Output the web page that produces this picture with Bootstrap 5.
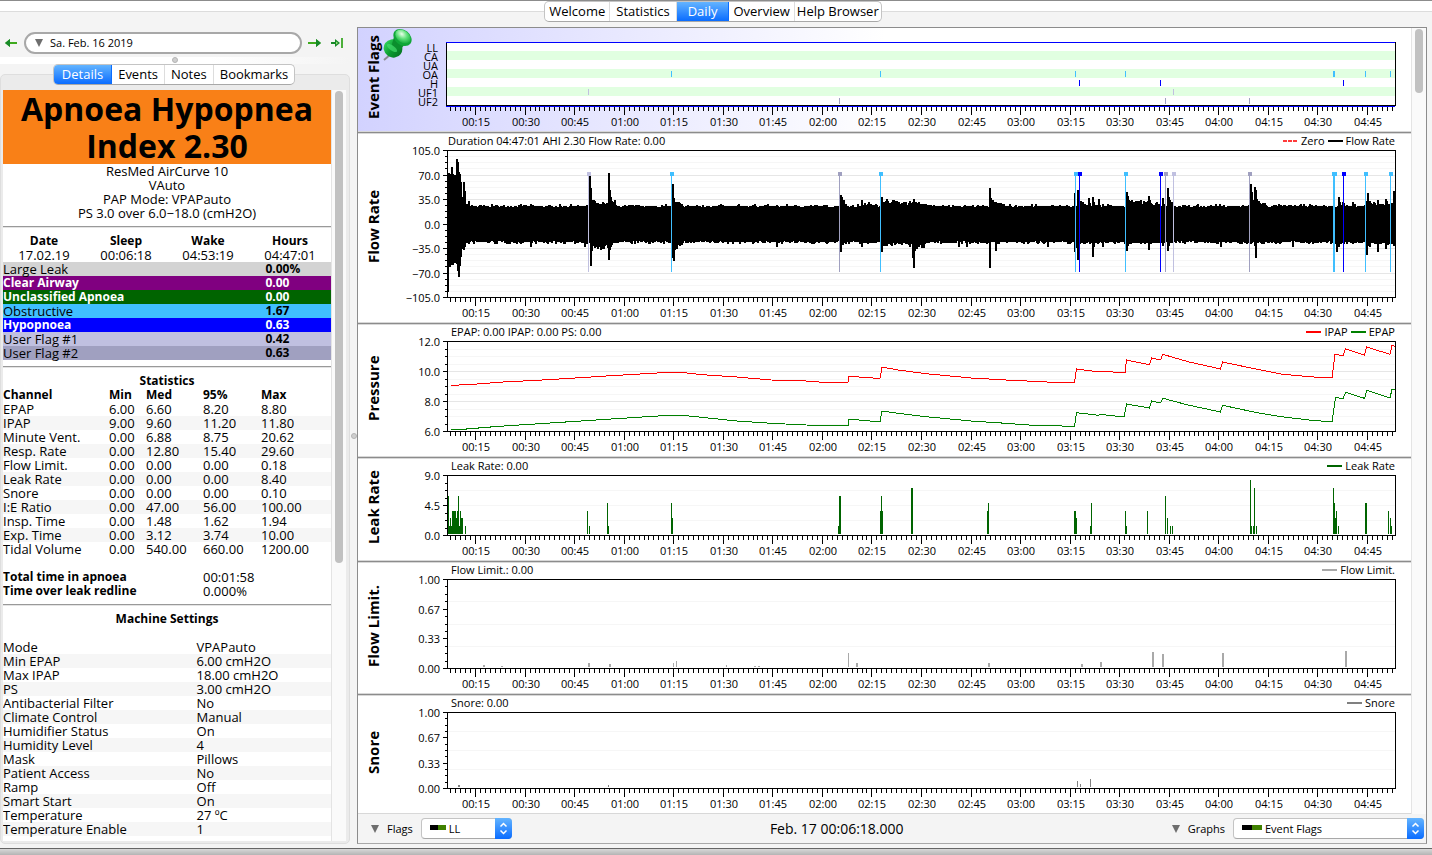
<!DOCTYPE html>
<html lang="en">
<head>
<meta charset="utf-8">
<meta name="viewport" content="width=device-width, initial-scale=1">
<title>Daily view</title>
<link rel="stylesheet" href="https://cdn.jsdelivr.net/npm/bootstrap@5.3.0/dist/css/bootstrap.min.css">
<style>
:root{--ui:"Open Sans","Noto Sans",sans-serif}
body{font-family:var(--ui);font-size:13px;line-height:14px;color:#000;background:#f4f4f4;overflow:hidden}
button,select{font-family:inherit;color:#000}
/* segmented tab bars */
.topstrip{height:27px;border-top:1px solid #8c8c8c;background:linear-gradient(#fff 10px,#dcdcdc 10px,#dcdcdc 11px,#f4f4f4 11px);padding-right:6px}
.seg{height:21px;background:#fff;border:1px solid #c4c4c4;border-bottom-color:#a8a8a8;border-radius:5px;overflow:hidden}
.seg button{border:0;border-right:1px solid #ddd;background:none;padding:0 6px;line-height:19px;font-size:13px}
.topstrip .seg button{padding:0 4px}
.topstrip .seg button:nth-child(2){padding:0 6px}
.topstrip .seg button:last-child{padding:0 2px}
.seg button:last-child{border-right:0}
.seg button.active{background:linear-gradient(#63b4ff,#0a6cff);color:#fff;border-color:#0a6cff}
.topstrip .seg button.active{padding:0 11px}
/* left side */
.side{width:350px}
.daterow{height:30px;padding:5px 0 3px 4px}
.datebtn{height:22px;margin:0 6px;border:2px solid #a8a8a8;border-radius:11px;background:#fff;font-size:11px;padding:0 9px;line-height:16px;gap:7px}
.tri{display:inline-block;border:4px solid transparent;border-top:8px solid #6e6e6e;border-bottom:0}
.icobtn{border:0;background:none;padding:0;line-height:0}
.grip{height:7px;background:linear-gradient(90deg,#fff,#fff 60%,#f4f4f4)}
.knob{width:6px;height:6px;border-radius:50%;background:#cfcfcf;border:1px solid #b4b4b4}
.pane{background:#ebebeb;border:1px solid #dedede;border-radius:5px;margin-top:-11px;padding:15px 3px 2px 2px}
.tabholder{position:relative;z-index:1;padding-right:2px}
.report{background:#fff;overflow:hidden}
.ahi{background:#f98017;font-size:32px;font-weight:700;line-height:37px;text-align:center;margin:0}
.rule{height:2px;margin:6px 0;background:linear-gradient(#999 1px,#e4e4e4 1px)}
.report table{width:100%;table-layout:fixed;border-collapse:collapse}
.report td,.report th{padding:0;height:14px;white-space:nowrap;vertical-align:top}
.report b,.report th{font-size:12px;font-weight:700}
.report b{display:block}
.zebra tr:nth-child(even){background:#f6f6f6}
.report h2{font-size:12px;line-height:14px;font-weight:700;text-align:center;margin:0}
.settings{margin-top:14px}
.bar{width:15px;background:#fafafa;border-left:1px solid #e4e4e4;padding:1px 3px}
.thumb{width:8px;border-radius:4px;background:#c1c1c1}
.split{width:7px}
/* graphs */
.graphs{border:1px solid #8c8c8c;border-bottom-color:#a8a8a8;margin-right:5px}
.chart{background:#fff;border-bottom:3px solid #d8d8d8;position:relative}
.chart::after{content:"";position:absolute;left:0;right:0;bottom:-2px;height:1px;background:#8c8c8c}
.chart.selected{background:linear-gradient(90deg,#d2d2ff,#fff 50%)}
.chart:last-child{border-bottom-width:2px}
.vtitle{width:30px;writing-mode:vertical-rl;transform:rotate(180deg);font-size:15px;line-height:18px;font-weight:700;text-align:center;white-space:nowrap;display:flex;justify-content:center;align-items:center;padding-top:4px}
.head{height:16px;line-height:13px;font-size:11px;font-weight:500;padding:0 16px 0 63px}
.flow .head{padding-left:60px}
.selected .head{height:14px}
.keys{gap:3px}
.key{width:15px;height:2px}
.key.dashed{background:repeating-linear-gradient(90deg,#ff3b3b 0 4px,#fff 4px 5px)}
.plot{display:block;width:100%;overflow:visible;font-size:11px;font-weight:500}
.pin{position:absolute;left:25px;top:0}
.status{height:29px;font-size:11px;padding:0 2px 0 13px}
.clock{font-size:14px;margin-right:10px}
.pick{position:relative;height:21px}
.pick select{appearance:none;width:100%;height:21px;border:1px solid #c4c4c4;border-bottom-color:#a8a8a8;border-radius:4px;background:#fff;font-size:11px;line-height:17px}
.pick .step{position:absolute;right:0;top:0;width:17px;height:21px;border-radius:0 4px 4px 0;background:linear-gradient(#63b4ff,#0a6cff);pointer-events:none}
.pick .chip{position:absolute;left:9px;top:7px;height:5px;background:linear-gradient(90deg,#000 50%,#3f8000 50%);pointer-events:none}
.flagpick{width:91px}.flagpick .chip{width:16px}.flagpick select{padding:0 20px 0 27px}
.graphpick{width:191px}.graphpick .chip{width:20px}.graphpick select{padding:0 20px 0 31px}
.floor{height:11px;background:linear-gradient(#f4f4f4 4px,#666 4px,#666 5px,#d8d8d8 5px,#b4b4b4)}
</style>
<script defer src="https://cdn.jsdelivr.net/npm/bootstrap@5.3.0/dist/js/bootstrap.bundle.min.js"></script>
</head>
<body class="d-flex flex-column vh-100">
<nav class="topstrip d-flex justify-content-center flex-shrink-0">
  <div class="seg d-flex">
    <button type="button">Welcome</button><button type="button">Statistics</button><button type="button" class="active">Daily</button><button type="button">Overview</button><button type="button">Help Browser</button>
  </div>
</nav>

<div class="d-flex flex-grow-1" style="min-height:0">
<aside class="side d-flex flex-column flex-shrink-0">
  <div class="daterow d-flex align-items-center">
    <button type="button" class="icobtn" aria-label="Previous day"><svg width="14" height="12"><path d="M6 2v3h7v2H6v3L1 6z" fill="#3faa1e"/><path d="M1 6l5-4v8z" fill="#178a28"/></svg></button>
    <button type="button" class="datebtn flex-grow-1 d-flex align-items-center"><span class="tri"></span><span>Sa. Feb. 16 2019</span></button>
    <button type="button" class="icobtn" aria-label="Next day"><svg width="14" height="12"><path d="M0 5h8V2l5 4-5 4V7H0z" fill="#3faa1e"/><path d="M8 2l5 4-5 4z" fill="#178a28"/></svg></button>
    <button type="button" class="icobtn ms-2 me-1" aria-label="Latest day"><svg width="16" height="12"><path d="M1 5h4V2l5 4-5 4V7H1z" fill="#178a28"/><path d="M6 4.500l2 1.500-2 1.500z" fill="#9be07c"/><path d="M11 1h2v10h-2z" fill="#4caf3a"/></svg></button>
  </div>
  <div class="grip d-flex justify-content-center"><span class="knob"></span></div>
  <div class="tabholder d-flex justify-content-center">
    <div class="seg d-flex"><button type="button" class="active px-2">Details</button><button type="button">Events</button><button type="button">Notes</button><button type="button">Bookmarks</button></div>
  </div>
  <div class="pane d-flex flex-grow-1" style="min-height:0">
    <div class="report flex-grow-1">
      <h1 class="ahi">Apnoea Hypopnea<br>Index 2.30</h1>
      <div class="text-center">ResMed AirCurve 10<br>VAuto<br>PAP Mode: VPAPauto<br>PS 3.0 over 6.0−18.0 (cmH2O)</div>
      <div class="rule"></div>
      <table class="text-center"><tr><th>Date</th><th>Sleep</th><th>Wake</th><th>Hours</th></tr><tr><td>17.02.19</td><td>00:06:18</td><td>04:53:19</td><td>04:47:01</td></tr></table>
      <table id="events"><colgroup><col><col style="width:20%"></colgroup></table>
      <div class="rule"></div>
      <h2>Statistics</h2>
      <table class="zebra" id="stats"></table>
      <div class="rule"></div>
      <h2>Machine Settings</h2>
      <table class="zebra settings" id="machine"></table>
    </div>
    <div class="bar"><div class="thumb" style="height:472px"></div></div>
  </div>
</aside>
<div class="split d-flex align-items-center justify-content-center"><span class="knob"></span></div>
<main class="graphs flex-grow-1 d-flex flex-column" style="min-width:0">
  <div class="d-flex flex-grow-1" style="min-height:0">
    <div class="flex-grow-1 overflow-hidden" id="charts" style="min-width:0"></div>
    <div class="bar"><div class="thumb" style="height:64px"></div></div>
  </div>
  <div class="status d-flex align-items-center justify-content-between flex-shrink-0">
    <div class="d-flex align-items-center"><span class="tri me-2"></span><label for="flags" class="me-2">Flags</label>
      <div class="pick flagpick"><select id="flags"><option>LL</option></select><span class="chip"></span><svg class="step" viewBox="0 0 17 21"><path d="M5.500 8.500l3-3 3 3M5.500 12.500l3 3 3-3" fill="none" stroke="#fff" stroke-width="1.500"/></svg></div></div>
    <span class="clock">Feb. 17 00:06:18.000</span>
    <div class="d-flex align-items-center"><span class="tri me-2"></span><label for="graphs" class="me-2">Graphs</label>
      <div class="pick graphpick"><select id="graphs"><option>Event Flags</option></select><span class="chip"></span><svg class="step" viewBox="0 0 17 21"><path d="M5.500 8.500l3-3 3 3M5.500 12.500l3 3 3-3" fill="none" stroke="#fff" stroke-width="1.500"/></svg></div></div>
  </div>
</main>
</div>
<footer class="floor flex-shrink-0"></footer>

<script>
const $=id=>document.getElementById(id);
/* ---- report tables ---- */
[['Large Leak','0.00%','#d3d3d3'],['Clear Airway','0.00','#800080',1],['Unclassified Apnoea','0.00','#006400',1],['Obstructive','1.67','#40bfff'],['Hypopnoea','0.63','#0000ff',1],['User Flag #1','0.42','#c0c0e0'],['User Flag #2','0.63','#a0a0c0']]
 .forEach(([n,v,c,w])=>$('events').insertAdjacentHTML('beforeend',`<tr style="background:${c};color:${w?'#fff':'#000'}"><td>${w?`<b>${n}</b>`:n}</td><td><b>${v}</b></td></tr>`));
const stats=`EPAP 6.00 6.60 8.20 8.80
IPAP 9.00 9.60 11.20 11.80
Minute_Vent. 0.00 6.88 8.75 20.62
Resp._Rate 0.00 12.80 15.40 29.60
Flow_Limit. 0.00 0.00 0.00 0.18
Leak_Rate 0.00 0.00 0.00 8.40
Snore 0.00 0.00 0.00 0.10
I:E_Ratio 0.00 47.00 56.00 100.00
Insp._Time 0.00 1.48 1.62 1.94
Exp._Time 0.00 3.12 3.74 10.00
Tidal_Volume 0.00 540.00 660.00 1200.00`.split('\n').map(r=>'<tr>'+r.split(' ').map(c=>`<td>${c.replace('_',' ')}</td>`).join('')+'</tr>').join('');
$('stats').innerHTML=`<colgroup>${[106,37,57,58,70].map(w=>`<col style="width:${w/3.28}%">`).join('')}</colgroup><thead><tr>${['Channel','Min','Med','95%','Max'].map(h=>`<th>${h}</th>`).join('')}</tr></thead><tbody>${stats}</tbody><tfoot><tr><td>&nbsp;</td></tr><tr style="background:none"><td colspan="3"><b>Total time in apnoea</b></td><td colspan="2">00:01:58</td></tr><tr><td colspan="3"><b>Time over leak redline</b></td><td colspan="2">0.000%</td></tr></tfoot>`;
$('machine').innerHTML=[['Mode','VPAPauto'],['Min EPAP','6.00 cmH2O'],['Max IPAP','18.00 cmH2O'],['PS','3.00 cmH2O'],['Antibacterial Filter','No'],['Climate Control','Manual'],['Humidifier Status','On'],['Humidity Level','4'],['Mask','Pillows'],['Patient Access','No'],['Ramp','Off'],['Smart Start','On'],['Temperature','27 ºC'],['Temperature Enable','1']]
 .map(([a,b])=>`<tr><td style="width:59%">${a}</td><td>${b}</td></tr>`).join('');

/* ---- charts: horizontal data is given on a scale of 948 units for the session ---- */
const CY='#40bfff',BL='#0000ff',L1='#c0c0e0',L2='#a0a0c0',UNITS=948;
const marks=[[141,L1,5],[224,CY,3],[392,L2,6],[433,CY,3],[628,CY,3],[632,BL,4],[678,CY,3],[713,BL,4],[718,L2,6],[726,L1,5],[802,L2,6],[886,CY,3],[887,CY,3],[896,BL,4],[918,CY,3],[943,CY,3]];
const ipap=[4,44.3,21,43.7,56,41,90,39.3,124,37.3,159,35,193,33,210,32,231,31,255,33.7,290,36,324,39,359,40,372,41,401,41,402,35,412,36,433,37.5,435,26,451,29,479,32.7,524,37,559,39,600,41,627.5,41,629.5,28,652,31,653,30,678,32,679.5,19,702.5,23.7,704.6,17,713.6,19,715.6,13.3,741,20.7,773.5,28,775.6,21,810,28.3,834,33,862,35.7,885,37,888,13,896,15,898.5,8,917.5,14,919.5,6,943,13.3,945,4,948,5.3];
const epap=[4,88,19.5,88,52,85.3,83,83.3,114,81.3,149,79,180,77,211,75,229.5,74.3,242,75,290,80,324,82.3,359,84,391,84.7,401,85,402,78,433,81,435,70,451,72.3,479,75.7,524,80,559,82.3,586,84.3,627.5,85.3,629.5,71.7,652,74.3,653,73.3,677,76,679.5,63,702.5,67,704.6,60,713.6,62,716,57.3,741,64,773.5,71,775.6,64.3,810,71.7,834,75.7,862,79,885,81,888.5,56.3,896,58,898.5,51.3,917.5,57.3,920,49.3,943,57,945,48,948,49];
/* bars: x, height, optional width */
const leak=[[1,38],[2,8],[3,16],[4,8],[5,23,4],[9,16],[10,23],[11,38],[12,8],[13,23],[14,16,2],[18,8],[140,23],[142,8],[160,31],[161,8],[224,31],[225,16],[391,8],[392,38,2],[433,23],[434,38],[435,23],[464,46,2],[540,23],[541,31],[627,23,2],[629,16],[643,8],[644,31],[678,23],[679,8],[700,23],[718,38],[720,16],[723,8],[725,8],[803,54],[804,8],[806,8],[807,46],[809,8],[886,46],[887,31],[888,16],[889,23],[891,8],[918,31,2],[941,23],[943,16],[944,8]];
const limit=[[36,2,2],[54,1,2],[141,4,2],[162,3,2],[226,4],[229,6],[279,2],[307,1,2],[311,1,2],[401,14],[409,4,2],[541,4,2],[634,3,2],[653,5,2],[705,15,2],[715,13,2],[775,14,2],[898,16,2]];
const snore=[[11,2,2],[161,2],[630,6],[633,3],[643,8]];
/* breath spikes: x, upper edge, lower edge, samples until the breathing settles */
const spikes=[[142,23,91,1],[143,48,116,22],[161,23,110,1],[162,40,100,6],[225,34,108,1],[226,48,111,9],[393,45,102,7],[414,50,97,16],[434,47,102,40],[462,51,97,20],[465,52,108,1],[466,49,118,12],[542,38,118,1],[543,48,92,14],[548,52,101,3],[627,43,102,1],[630,40,110,1],[631,48,98,7],[641,48,92,2],[645,47,107,1],[646,52,97,4],[651,49,92,1],[660,54,93,16],[679,42,101,1],[680,46,96,34],[701,46,100,3],[715,48,96,2],[720,38,101,1],[721,47,96,5],[803,34,94,1],[804,42,92,2],[807,37,96,1],[808,40,108,1],[809,49,92,10],[845,56,97,1],[889,43,102,1],[891,47,97,6],[905,52,94,3],[919,51,105,1],[920,43,96,3],[922,51,97,26],[930,50,102,2],[938,49,99,10],[946,41,96,2]];
const start=[[38,142],[23,102],[28,117],[24,115],[17,107],[24,115],[59,113],[25,106],[59,113],[9,114],[12,121],[22,127],[24,116],[32,107],[54,99],[47,92],[32,100],[41,97],[59,91],[54,93],[60,92],[51,94],[57,92]];
function wave(k){
  let seed=7,d='';const rnd=()=>(seed=(seed*16807)%2147483647)/2147483647;
  const env=[];
  for(let i=0;i<UNITS;i++){
    const r1=rnd(),r2=rnd();let a=57-(r1>.4?1:0)-(r1>.85?1:0)-(r1>.97?1:0),b=91+(r2>.3?1:0)+(r2>.7?1:0)+(r2>.9?1:0)+(r2>.985?3:0);
    if(start[i])[a,b]=start[i];
    env.push([a,b]);
  }
  for(const[x,t,m,n]of spikes)for(let i=0;i<n&&x+i<UNITS;i++){
    const f=i?(.2+.7*rnd())*(1-.6*i/n):1,g=i?(.1+.35*rnd())*(1-.5*i/n):1,e=env[x+i];
    e[0]=Math.min(e[0],Math.round(57-(57-t)*f));e[1]=Math.max(e[1],Math.round(92+(m-92)*g));
  }
  env[399]=[61,83];env[629]=[69,98];env[889][0]=69;env[143][0]=38;
  env.forEach(([a,b],i)=>d+=`M${(1+i)*k} ${a}V${b}`);
  return `<path d="${d}" stroke="#000" stroke-width="${Math.max(1.1,k*1.1)}"/>`;
}
const key=(n,c)=>`<span class="key${c?'':' dashed'}"${c?` style="background:${c}"`:''}></span><span>${n}</span>`;
const bars=(l,c,h,k)=>l.map(([x,v,w=1])=>`<rect x="${Math.round(x*k)}" y="${h-v-1}" width="${w}" height="${v}" fill="${c}"/>`).join('');
const line=(p,c,k)=>`<polyline fill="none" stroke="${c}" shape-rendering="crispEdges" points="${p.map((v,i)=>i%2?v:v*k).join(' ')}"/>`;
const charts=[
 {t:'Event Flags',h:64,flags:['LL','CA','UA','OA','H','UF1','UF2']},
 {t:'Flow Rate',cls:'flow',cap:'Duration 04:47:01 AHI 2.30 Flow Rate: 0.00',keys:key('Zero')+key('Flow Rate','#000'),h:147,y:['105.0','70.0','35.0','0.0','−35.0','−70.0','−105.0'],major:6,minor:24,
  body:k=>wave(k)+marks.map(([x,c])=>`<path d="M${Math.round(x*k)}.5 22V122" stroke="${c}"/><path d="M${Math.round(x*k)-1} 22h4v4h-4z" fill="${c}"/>`).join('')},
 {t:'Pressure',cap:'EPAP: 0.00 IPAP: 0.00 PS: 0.00',keys:key('IPAP','#f00')+key('EPAP','#008000'),h:90,y:['12.0','10.0','8.0','6.0'],major:3,minor:12,body:k=>line(ipap,'#f00',k)+line(epap,'#008000',k)},
 {t:'Leak Rate',cap:'Leak Rate: 0.00',keys:key('Leak Rate','#006400'),h:60,y:['9.0','4.5','0.0'],minor:4,body:k=>bars(leak,'#006400',60,k)},
 {t:'Flow Limit.',cap:'Flow Limit.: 0.00',keys:key('Flow Limit.','#a9a9a9'),h:89,y:['1.00','0.67','0.33','0.00'],minor:4,body:k=>bars(limit,'#a9a9a9',89,k)},
 {t:'Snore',cap:'Snore: 0.00',keys:key('Snore','#808080'),h:76,y:['1.00','0.67','0.33','0.00'],minor:4,body:k=>bars(snore,'#808080',76,k)}];
const pin=`<svg class="pin" width="32" height="34" viewBox="0 0 32 34"><defs><radialGradient id="g1" cx=".35" cy=".4" r=".7"><stop offset="0" stop-color="#e9ffe9"/><stop offset=".5" stop-color="#5fe07a"/><stop offset="1" stop-color="#10a838"/></radialGradient><linearGradient id="g2"><stop offset="0" stop-color="#2fd058"/><stop offset=".5" stop-color="#0b9a30"/><stop offset="1" stop-color="#077a24"/></linearGradient></defs><path d="M8 26l-7 6" stroke="#8a8a92" stroke-width="2"/><ellipse cx="10" cy="20.500" rx="9.500" ry="9" transform="rotate(35 10 20.500)" fill="url(#g2)"/><path d="M11 9l12 6-6 7c-4 0-8-3-8-6z" fill="#0b8f2d"/><ellipse cx="9" cy="20" rx="6" ry="2.500" transform="rotate(35 9 20)" fill="#45dc6c" opacity=".7"/><ellipse cx="19.500" cy="9.500" rx="10" ry="7.500" transform="rotate(38 19.500 9.500)" fill="#0fa637"/><ellipse cx="20" cy="8.500" rx="8.500" ry="6" transform="rotate(38 20 8.500)" fill="url(#g1)"/></svg>`;
$('charts').innerHTML=charts.map((c,i)=>`<section class="chart d-flex ${c.cls||''} ${i?'':'selected'}"><div class="vtitle">${c.t}</div><div class="flex-grow-1" style="min-width:0"><div class="head d-flex align-items-start"><span class="me-auto">${c.cap||''}</span><span class="keys d-flex align-items-center">${c.keys||''}</span></div><svg class="plot" height="${c.h+25}"></svg></div>${i?'':pin}</section>`).join('');
const plots=[...document.querySelectorAll('.plot')];
function draw(){
  plots.forEach((svg,n)=>{
    const c=charts[n],L=59,W=svg.clientWidth-L-16,h=c.h,k=W/UNITS,x=t=>Math.round((t-6.5)/287*W);
    let s=`<g transform="translate(${L} 0)"><g shape-rendering="crispEdges"><path d="M0 0h${W}v${h}h-${W}z" fill="#fff"/>`;
    if(c.flags){
      for(let r=1;r<6;r+=2)s+=`<path d="M0 ${r*9}h${W}v9h-${W}z" fill="#e1ffe1"/>`;
      marks.forEach(([p,col,r])=>s+=`<path d="M${Math.round(p*k)} ${r*9+2}v6h1v-6z" fill="${col}"/>`);
      s+=`<path d="M-.5 0V${h}M-.5 ${h-.5}H${W+.5}V0" stroke="#000" fill="none"/><path d="M-1 .5H${W}M-1 ${h+.5}H${W}" stroke="#00f"/>`;
    }else{
      for(let i=1;i<c.minor;i++){const g=Math.round(h*i/c.minor)+.5;s+=`<path d="M1 ${g}H${W}" stroke="${c.major&&i%4==0?'#e6e6e6':'#f6f6f6'}"/>`}
      const m=(c.y.length-1)*4;
      for(let i=0;i<=m;i++){const g=Math.round(h*i/m)+.5;s+=`<path d="M0 ${g}h${i%4?-2:-4}" stroke="#000"/>`}
      s+=`<path d="M.5 .5H${W+.5}V${h+.5}H.5z" stroke="#000" fill="none"/>`+c.body(k);
    }
    for(let t=7.5;t<293.3;t+=1.5){const p=x(t)+.5;s+=`<path d="M${p} ${h+1}v${t%15?4:8}" stroke="#000"/>`}
    s+='</g>';
    for(let t=15;t<290;t+=15)s+=`<text x="${x(t)+1}" y="${h+20}" text-anchor="middle">${String(t/60|0).padStart(2,0)}:${String(t%60).padStart(2,0)}</text>`;
    (c.y||[]).forEach((v,i)=>s+=`<text x="-7" y="${Math.round(h*i/(c.y.length-1))+5}" text-anchor="end">${v}</text>`);
    (c.flags||[]).forEach((v,i)=>s+=`<text x="-9" y="${i*9+10}" text-anchor="end" font-weight="400">${v}</text>`);
    svg.innerHTML=s+'</g>';
  });
}
draw();addEventListener('resize',draw);
</script>
</body>
</html>
